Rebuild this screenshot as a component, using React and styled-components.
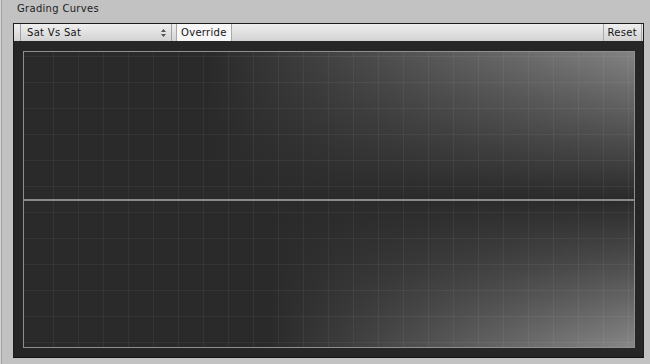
import React from 'react';
import styled, { createGlobalStyle } from 'styled-components';

const GlobalStyle = createGlobalStyle`
  html, body {
    margin: 0;
    padding: 0;
    background: #c2c2c2;
  }
  body {
    font-family: 'DejaVu Sans', 'Liberation Sans', sans-serif;
    font-size: 10px;
    letter-spacing: 0.3px;
    color: #151515;
  }
`;

const Page = styled.div`
  width: 650px;
  height: 364px;
  box-sizing: border-box;
  border-left: 1px solid #d4d4d4;
  box-shadow: inset 1px 0 0 #a3a3a3;
  display: flex;
  flex-direction: column;
`;

const Header = styled.div`
  height: 18px;
  line-height: 17px;
  padding-left: 16px;
  color: #1c1c1c;
`;

const Panel = styled.section`
  margin: 5px 0 0 12px;
  width: 629px;
  border: 1px solid #1c1c1c;
  border-bottom-color: #101010;
  display: flex;
  flex-direction: column;
`;

const Toolbar = styled.div`
  height: 17px;
  display: flex;
  align-items: stretch;
  padding-left: 6px;
  padding-right: 1px;
  background: linear-gradient(#efefef, #d3d3d3);
`;

const Dropdown = styled.div`
  width: 152px;
  display: flex;
  align-items: center;
  justify-content: space-between;
  padding: 0 5px 0 6px;
  box-sizing: border-box;
  border-left: 1px solid #a2a2a2;
  border-right: 1px solid #a2a2a2;
`;

const ToolButton = styled.div`
  display: flex;
  align-items: center;
  padding: 0 ${p => p.pad || 5}px;
  border-left: 1px solid #a8a8a8;
  border-right: 1px solid #a8a8a8;
  margin-left: ${p => p.gap || 0}px;
  background: ${p => (p.active ? '#f7f7f7' : 'transparent')};
`;

const Spacer = styled.div`
  flex: 1;
`;

const Body = styled.div`
  background: #262626;
  padding: 10px 6px 9px 9px;
`;

const Graph = styled.svg`
  display: block;
`;

const Arrows = () => (
  <svg width="5" height="8" viewBox="0 0 5 8">
    <path d="M2.5 0 L5 3 L0 3 Z M2.5 8 L5 5 L0 5 Z" fill="#555" />
  </svg>
);

const W = 612;
const H = 297;
const MID = 148;

function CurveGraph() {
  const vlines = [];
  for (let x = 30; x < W - 1; x += 25) vlines.push(x);
  const hlines = [];
  for (let y = MID - 13; y > 1; y -= 26) hlines.push(y);
  for (let y = MID + 13; y < H - 1; y += 26) hlines.push(y);

  return (
    <Graph width={W} height={H} viewBox={`0 0 ${W} ${H}`}>
      <defs>
        <linearGradient id="topH" x1="0" y1="0" x2="1" y2="0">
          <stop offset="0" stopColor="#fff" stopOpacity="0" />
          <stop offset="0.3" stopColor="#fff" stopOpacity="0" />
          <stop offset="1" stopColor="#fff" stopOpacity="0.42" />
        </linearGradient>
        <linearGradient id="botH" x1="0" y1="0" x2="1" y2="0">
          <stop offset="0" stopColor="#fff" stopOpacity="0" />
          <stop offset="0.4" stopColor="#fff" stopOpacity="0" />
          <stop offset="1" stopColor="#fff" stopOpacity="0.44" />
        </linearGradient>
        <linearGradient id="topV" x1="0" y1="0" x2="0" y2="1">
          <stop offset="0" stopColor="#2a2a2a" stopOpacity="0" />
          <stop offset="0.55" stopColor="#2a2a2a" stopOpacity="0.55" />
          <stop offset="1" stopColor="#2a2a2a" stopOpacity="1" />
        </linearGradient>
        <linearGradient id="botV" x1="0" y1="0" x2="0" y2="1">
          <stop offset="0" stopColor="#2a2a2a" stopOpacity="1" />
          <stop offset="0.45" stopColor="#2a2a2a" stopOpacity="0.6" />
          <stop offset="1" stopColor="#2a2a2a" stopOpacity="0" />
        </linearGradient>
      </defs>
      <rect x="0" y="0" width={W} height={H} fill="#2a2a2a" />
      <rect x="0" y="0" width={W} height={MID} fill="url(#topH)" />
      <rect x="0" y="0" width={W} height={MID} fill="url(#topV)" />
      <rect x="0" y={MID} width={W} height={H - MID} fill="url(#botH)" />
      <rect x="0" y={MID} width={W} height={H - MID} fill="url(#botV)" />
      {vlines.map(x => (
        <line key={'v' + x} x1={x + 0.5} y1="0" x2={x + 0.5} y2={H} stroke="#fff" strokeOpacity="0.05" />
      ))}
      {hlines.map(y => (
        <line key={'h' + y} x1="0" y1={y + 0.5} x2={W} y2={y + 0.5} stroke="#fff" strokeOpacity="0.05" />
      ))}
      <rect x="0" y={MID} width={W} height="2" fill="#8a8a8a" />
      <rect x="0.5" y="0.5" width={W - 1} height={H - 1} fill="none" stroke="#8e8e8e" />
    </Graph>
  );
}

export default function App() {
  return (
    <Page>
      <GlobalStyle />
      <Header>Grading Curves</Header>
      <Panel>
        <Toolbar>
          <Dropdown>
            <span>Sat Vs Sat</span>
            <Arrows />
          </Dropdown>
          <ToolButton active gap={4} pad={4}>Override</ToolButton>
          <Spacer />
          <ToolButton pad={4}>Reset</ToolButton>
        </Toolbar>
        <Body>
          <CurveGraph />
        </Body>
      </Panel>
    </Page>
  );
}
